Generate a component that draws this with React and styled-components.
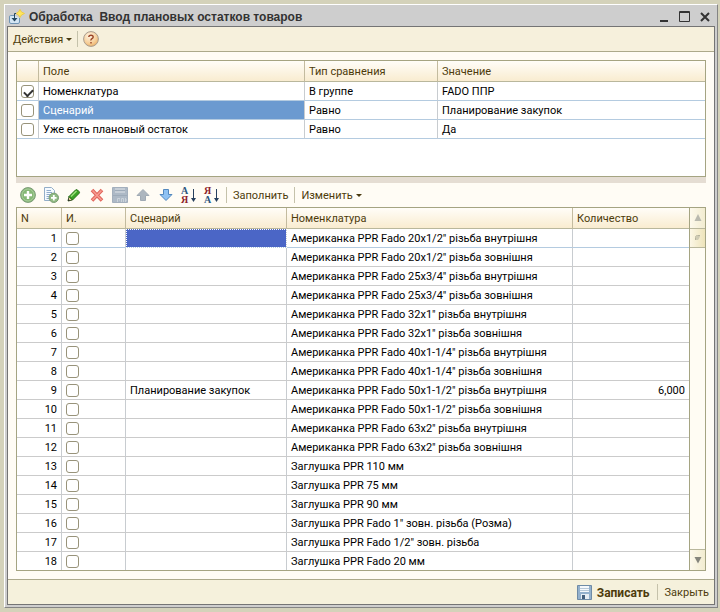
import React from "react"
import styled, { createGlobalStyle } from "styled-components"

const filters = [
  { field: "Номенклатура", compare: "В группе", value: "FADO ППР", on: true },
  {
    field: "Сценарий",
    compare: "Равно",
    value: "Планирование закупок",
    selected: true,
  },
  { field: "Уже есть плановый остаток", compare: "Равно", value: "Да" },
]

const goods = [
  { name: 'Американка PPR Fado 20x1/2" різьба внутрішня', selected: true },
  { name: 'Американка PPR Fado 20x1/2" різьба зовнішня' },
  { name: 'Американка PPR Fado 25x3/4" різьба внутрішня' },
  { name: 'Американка PPR Fado 25x3/4" різьба зовнішня' },
  { name: 'Американка PPR Fado 32x1" різьба внутрішня' },
  { name: 'Американка PPR Fado 32x1" різьба зовнішня' },
  { name: 'Американка PPR Fado 40x1-1/4" різьба внутрішня' },
  { name: 'Американка PPR Fado 40x1-1/4" різьба зовнішня' },
  {
    name: 'Американка PPR Fado 50x1-1/2" різьба внутрішня',
    scenario: "Планирование закупок",
    amount: "6,000",
  },
  { name: 'Американка PPR Fado 50x1-1/2" різьба зовнішня' },
  { name: 'Американка PPR Fado 63x2" різьба внутрішня' },
  { name: 'Американка PPR Fado 63x2" різьба зовнішня' },
  { name: "Заглушка PPR 110 мм" },
  { name: "Заглушка PPR 75 мм" },
  { name: "Заглушка PPR 90 мм" },
  { name: 'Заглушка PPR Fado 1" зовн. різьба (Розма)' },
  { name: 'Заглушка PPR Fado 1/2" зовн. різьба' },
  { name: "Заглушка PPR Fado 20 мм" },
]

const AppIcon = () => (
  <svg width="16" height="16" viewBox="0 0 16 16" fill="none">
    <path
      d="M5 6.500H1.500Q0.500 6.500 0.500 8V13Q0.500 14.500 2 14.500H9Q10.500 14.500 10.500 13V9"
      fill="#d3e5f3"
      stroke="#6f94b5"
    />
    <path d="M9 4.500H5.500V11" stroke="#24465f" />
    <path d="M2.500 9H8.500L5.500 12.500Z" fill="#24465f" />
    <path
      d="M11 0.500L12.500 3L15.500 4.500L12.500 6L11 8.500L9.500 6L7 4.500L9.500 3Z"
      fill="#ffe65c"
      stroke="#eccb4c"
    />
  </svg>
)

const HelpIcon = () => (
  <svg width="16" height="16" viewBox="0 0 16 16">
    <defs>
      <radialGradient id="help" cx="0.4" cy="0.3" r="0.8">
        <stop offset="0" stopColor="#fff3e2" />
        <stop offset="0.6" stopColor="#f6cf9a" />
        <stop offset="1" stopColor="#e9a759" />
      </radialGradient>
    </defs>
    <circle cx="8" cy="8" r="7.400" fill="url(#help)" stroke="#a89c90" />
    <path
      d="M5.800 6Q5.800 4.200 8 4.200T10.200 6Q10.200 7 9 7.700T8 9.500M8 11V12.500"
      fill="none"
      stroke="#9a4426"
      strokeWidth="1.400"
    />
  </svg>
)

const AddIcon = () => (
  <svg width="16" height="16" viewBox="0 0 16 16">
    <circle cx="8" cy="8" r="7.400" fill="#86b877" stroke="#7c9b78" />
    <circle cx="8" cy="8" r="6" fill="none" stroke="#a9cf9b" />
    <path d="M8 4V12M4 8H12" stroke="#fff" strokeWidth="2.400" />
  </svg>
)

const CopyIcon = () => (
  <svg width="16" height="16" viewBox="0 0 16 16">
    <path d="M1.500 0.500H8.500L11.500 3.500V13.500H1.500Z" fill="#f5faff" stroke="#93aec8" />
    <path d="M3.500 3.500H8M3.500 5.500H9M3.500 7.500H8M3.500 9.500H6M3.500 11.500H6" stroke="#8faccb" />
    <circle cx="10.800" cy="10.800" r="4.700" fill="#8fba82" stroke="#7a9c74" />
    <path d="M10.800 8V13.600M8 10.800H13.600" stroke="#fff" strokeWidth="1.800" />
  </svg>
)

const EditIcon = () => (
  <svg width="16" height="16" viewBox="0 0 16 16">
    <path d="M2 14L3 9.500L6.500 13Z" fill="#f3d9a4" stroke="#3b5a2a" />
    <path d="M3 9.500L9.500 3Q10.500 2 11.500 3L13.200 4.700Q14 5.500 13 6.500L6.500 13Z" fill="#3ba226" stroke="#256f17" />
    <path d="M5 9.500L10.500 4" stroke="#9be07c" strokeWidth="1.500" />
    <path d="M2 14L2.500 12L4 13.500Z" fill="#222" />
  </svg>
)

const DeleteIcon = () => (
  <svg width="16" height="16" viewBox="0 0 16 16">
    <path d="M3 3L13 13.500M13 3L3 13.500" stroke="#e0645a" strokeWidth="3.600" />
    <path d="M3.500 3.500L12.500 13M12.500 3.500L3.500 13" stroke="#f79a90" strokeWidth="1.600" />
  </svg>
)

const DisabledSaveIcon = () => (
  <svg width="16" height="16" viewBox="0 0 16 16">
    <path d="M0.500 0.500H15.500V15.500H0.500Z" fill="#adb9c6" stroke="#a3afbd" />
    <path d="M3 1H13V6H3Z" fill="#c6ced7" />
    <path d="M3 3.500H13M1 8.500H15" stroke="#9eabb9" />
    <path d="M5.500 15V11.500H8M7 13H8M9.500 15V11.500H11.500V15M13.500 11V15M13.500 13H15" fill="none" stroke="#cbd3db" />
  </svg>
)

const SaveIcon = () => (
  <svg width="16" height="16" viewBox="0 0 16 16">
    <path d="M0.500 0.500H14.500V14.500H0.500Z" fill="#93b1cd" stroke="#6e8ba6" />
    <path d="M3 1H12V7H3Z" fill="#f4f8fb" />
    <path d="M3 3.500H12M3 5.500H12" stroke="#b6c8d8" />
    <path d="M4 9H12V14H4Z" fill="#e6edf3" />
    <path d="M5 10H8V14H5Z" fill="#425e7b" />
  </svg>
)

const MoveIcon = ({ down }) => (
  <svg width="16" height="16" viewBox="0 0 16 16">
    {down ? (
      <path d="M5.500 2.500H10.500V7.500H14L8 13.500L2 7.500H5.500Z" fill="#8fc2f3" stroke="#5388be" />
    ) : (
      <path d="M8 2.500L14 8.500H10.500V13.500H5.500V8.500H2Z" fill="#adb6bf" stroke="#a0aab4" />
    )}
  </svg>
)

const Triangle = ({ up }) => (
  <svg width="8" height="8" viewBox="0 0 8 8">
    {up ? (
      <path d="M4 0L7.500 7H0.500Z" fill="#b9b9ae" />
    ) : (
      <path d="M0.500 1H7.500L4 7.500Z" fill="#85857c" />
    )}
  </svg>
)

const Grip = () => (
  <svg width="6" height="6" viewBox="0 0 6 6">
    <path d="M0.500 5V2.500Q0.500 0.500 2.500 0.500H5" fill="none" stroke="#b5b29c" />
    <path d="M1 5V1H5Q4.500 3.500 3 5Z" fill="#cfcbb4" />
  </svg>
)

const Caret = () => (
  <svg width="6" height="3" viewBox="0 0 6 3">
    <path d="M0 0H6L3 3Z" fill="#4a3a10" />
  </svg>
)

const SortIcon = ({ top, bottom, reverse }) => (
  <svg width="16" height="18" viewBox="0 0 16 18" overflow="visible">
    <SortLetter x="0" y="8" $red={reverse}>
      {top}
    </SortLetter>
    <SortLetter x="0" y="17" $red={!reverse}>
      {bottom}
    </SortLetter>
    <path d="M12.500 3V15" stroke="#27405e" />
    <path d="M10 12H15L12.500 16Z" fill="#27405e" />
  </svg>
)

const App = () => {
  return (
    <Desktop>
      <GlobalStyle />
      <Window>
        <TitleBar>
          <AppIcon />
          <Title>Обработка&nbsp; Ввод плановых остатков товаров</Title>
          <WindowButton aria-label="Свернуть">
            <svg width="12" height="12">
              <path d="M1 10H9" stroke="#333" strokeWidth="2" />
            </svg>
          </WindowButton>
          <WindowButton aria-label="Развернуть">
            <svg width="12" height="12">
              <path d="M0.500 0.500H10.500V10.500H0.500ZM0 1.500H11" fill="none" stroke="#333" />
            </svg>
          </WindowButton>
          <WindowButton aria-label="Закрыть окно">
            <svg width="12" height="12">
              <path d="M2 2L10 10M10 2L2 10" stroke="#333" strokeWidth="2" />
            </svg>
          </WindowButton>
        </TitleBar>
        <Client>
          <MenuBar>
            <TextButton>
              Действия
              <Caret />
            </TextButton>
            <Separator />
            <IconButton aria-label="Справка">
              <HelpIcon />
            </IconButton>
          </MenuBar>
          <Content>
            <FilterPanel>
              <Table>
                <colgroup>
                  <Col $width={22} />
                  <Col />
                  <Col $width={133} />
                  <Col $width={267} />
                </colgroup>
                <thead>
                  <tr>
                    <HeadCell />
                    <HeadCell>Поле</HeadCell>
                    <HeadCell>Тип сравнения</HeadCell>
                    <HeadCell>Значение</HeadCell>
                  </tr>
                </thead>
                <tbody>
                  {filters.map(row => (
                    <Row key={row.field} $blue>
                      <CheckCell>
                        <Check aria-label={row.field} defaultChecked={row.on} />
                      </CheckCell>
                      <Cell $active={row.selected}>{row.field}</Cell>
                      <Cell>{row.compare}</Cell>
                      <Cell>{row.value}</Cell>
                    </Row>
                  ))}
                </tbody>
              </Table>
            </FilterPanel>
            <Splitter />
            <Toolbar>
              <Icons>
                <IconButton aria-label="Добавить">
                  <AddIcon />
                </IconButton>
                <IconButton aria-label="Скопировать">
                  <CopyIcon />
                </IconButton>
                <IconButton aria-label="Изменить строку">
                  <EditIcon />
                </IconButton>
                <IconButton aria-label="Удалить">
                  <DeleteIcon />
                </IconButton>
                <IconButton aria-label="Сохранить строку" disabled>
                  <DisabledSaveIcon />
                </IconButton>
                <IconButton aria-label="Вверх" disabled>
                  <MoveIcon />
                </IconButton>
                <IconButton aria-label="Вниз">
                  <MoveIcon down />
                </IconButton>
                <IconButton aria-label="По возрастанию">
                  <SortIcon top="А" bottom="Я" />
                </IconButton>
                <IconButton aria-label="По убыванию">
                  <SortIcon top="Я" bottom="А" reverse />
                </IconButton>
              </Icons>
              <Separator />
              <TextButton>Заполнить</TextButton>
              <Separator />
              <TextButton>
                Изменить
                <Caret />
              </TextButton>
            </Toolbar>
            <GoodsPanel>
              <Table>
                <colgroup>
                  <Col $width={45} />
                  <Col $width={64} />
                  <Col $width={161} />
                  <Col />
                  <Col $width={116} />
                </colgroup>
                <thead>
                  <tr>
                    <HeadCell>N</HeadCell>
                    <HeadCell>И.</HeadCell>
                    <HeadCell>Сценарий</HeadCell>
                    <HeadCell>Номенклатура</HeadCell>
                    <HeadCell>Количество</HeadCell>
                  </tr>
                </thead>
                <tbody>
                  {goods.map((row, i) => (
                    <Row key={row.name} $blue={row.selected}>
                      <Cell $right>{i + 1}</Cell>
                      <CheckCell>
                        <Check aria-label={"И. " + (i + 1)} />
                      </CheckCell>
                      <Cell $focused={row.selected}>{row.scenario}</Cell>
                      <Cell>{row.name}</Cell>
                      <Cell $right>{row.amount}</Cell>
                    </Row>
                  ))}
                </tbody>
              </Table>
              <Scrollbar>
                <ScrollButton aria-label="Прокрутить вверх">
                  <Triangle up />
                </ScrollButton>
                <Thumb>
                  <Grip />
                </Thumb>
                <Track />
                <ScrollButton aria-label="Прокрутить вниз" $bottom>
                  <Triangle />
                </ScrollButton>
              </Scrollbar>
            </GoodsPanel>
          </Content>
          <Footer>
            <TextButton $bold>
              <SaveIcon />
              Записать
            </TextButton>
            <Separator />
            <TextButton>Закрыть</TextButton>
          </Footer>
        </Client>
      </Window>
    </Desktop>
  )
}

const GlobalStyle = createGlobalStyle`
  * {
    box-sizing: border-box;
  }
  body {
    margin: 0;
    background: #d4d2ba;
    color: #000;
    font: 11px/16px Roboto, "Liberation Sans", sans-serif;
  }
  button {
    margin: 0;
    padding: 0;
    border: 0;
    background: none;
    color: inherit;
    font: inherit;
  }
  svg {
    display: block;
    flex: none;
  }
`

const Desktop = styled.div`
  display: flex;
  min-height: 100vh;
  padding: 4px 2px 4px 4px;
`

const Window = styled.main`
  display: flex;
  flex: 1;
  flex-direction: column;
  min-width: 0;
  padding: 0 2px 2px;
  background: #cecece;
  border: 1px solid #fff;
  border-right-color: #848484;
  border-bottom-color: #848484;
`

const TitleBar = styled.header`
  display: flex;
  align-items: center;
  gap: 8px;
  height: 21px;
  padding: 2px 4px 0 2px;
  color: #333;
`

const Title = styled.h1`
  flex: 1;
  margin: 0 0 0 -4px;
  font: bold 12px/16px "Liberation Sans", sans-serif;
`

const WindowButton = styled.button`
  width: 12px;
  height: 12px;
`

const Client = styled.div`
  display: flex;
  flex: 1;
  flex-direction: column;
  background: #fffcf5;
  border: 1px solid #747474;
`

const MenuBar = styled.div`
  display: flex;
  align-items: center;
  gap: 5px;
  height: 25px;
  padding: 0 5px;
  background: #f6f0dc;
  border-bottom: 1px solid #aca98b;
`

const TextButton = styled.button`
  display: flex;
  align-items: center;
  gap: 3px;
  padding-top: 1px;
  color: #4d3b0b;
  ${props => props.$bold && "gap: 4px; font-weight: bold; font-size: 12px;"}
`

const IconButton = styled.button`
  display: flex;
  align-items: center;
  width: 16px;
  height: 16px;
`

const Separator = styled.span`
  width: 1px;
  height: 16px;
  background: #c5c2ab;
`

const Content = styled.div`
  flex: 1;
  padding: 8px;
`

const FilterPanel = styled.section`
  height: 117px;
  overflow: hidden;
  background: #fff;
  border: 1px solid #a5a482;
`

const Splitter = styled.div`
  height: 6px;
  background: #e5ddd3;
`

const Toolbar = styled.div`
  display: flex;
  align-items: center;
  gap: 6px;
  height: 24px;
  padding: 0 4px;
`

const Icons = styled.div`
  display: flex;
  gap: 7px;
`

const SortLetter = styled.text`
  font: bold 10px "Liberation Serif", serif;
  fill: ${props => (props.$red ? "#8e1f2b" : "#2b567f")};
`

const GoodsPanel = styled.section`
  display: flex;
  background: #fff;
  border: 1px solid #a5a482;
`

const Table = styled.table`
  flex: 1;
  width: 100%;
  min-width: 0;
  table-layout: fixed;
  border-spacing: 0;
  white-space: nowrap;
`

const Col = styled.col`
  width: ${props => (props.$width ? props.$width + "px" : "auto")};
`

const HeadCell = styled.th`
  height: 21px;
  padding: 2px 4px 0;
  background: linear-gradient(#fffdf8, #f9ecd0);
  border-right: 1px solid #c3bb9f;
  border-bottom: 1px solid #b9b79c;
  color: #4d3b0b;
  font-weight: normal;
  text-align: left;
  &:last-child {
    border-right: 0;
  }
`

const Cell = styled.td`
  height: 19px;
  padding: 2px 4px 0;
  overflow: hidden;
  border-right: 1px solid #c8ccd0;
  border-bottom: 1px solid #cbcbcb;
  text-align: ${props => (props.$right ? "right" : "left")};
  ${props => props.$active && "background: #6b9ad0; color: #fff;"}
  ${props =>
    props.$focused &&
    "background: #4b66c6; outline: 1px dotted #fff; outline-offset: -1px;"}
  &:last-child {
    border-right: 0;
  }
`

const CheckCell = styled(Cell)`
  padding-top: 0;
  line-height: 0;
`

const Row = styled.tr`
  td {
    ${props => props.$blue && "border-bottom-color: #b4cbe0;"}
  }
  &:last-child td {
    ${props => !props.$blue && "height: 18px; border-bottom: 0;"}
  }
`

const Check = styled.input.attrs({ type: "checkbox" })`
  width: 13px;
  height: 13px;
  margin: 0;
  appearance: none;
  background: #fff;
  border: 1px solid #98937a;
  border-radius: 3px;
  vertical-align: middle;
  &:checked::before {
    content: "";
    display: block;
    width: 7px;
    height: 4px;
    margin: 3px 2px;
    border: solid #333;
    border-width: 0 0 2px 2px;
    transform: rotate(-45deg);
  }
`

const Scrollbar = styled.div`
  display: flex;
  flex-direction: column;
  width: 16px;
  border-left: 1px solid #a5a482;
  background: #fffcf3;
`

const ScrollButton = styled.button`
  display: grid;
  place-items: center;
  height: 21px;
  background: linear-gradient(90deg, #fdf9ec, #f2ecd0);
  border: solid #b9b79c;
  border-width: ${props => (props.$bottom ? "1px 0 0" : "0 0 1px")};
`

const Thumb = styled.div`
  display: grid;
  place-items: center;
  height: 19px;
  background: linear-gradient(90deg, #fcf7e6, #eee4ba);
  border-bottom: 1px solid #b9b79c;
`

const Track = styled.div`
  flex: 1;
`

const Footer = styled.footer`
  display: flex;
  align-items: center;
  justify-content: flex-end;
  gap: 7px;
  height: 25px;
  padding: 0 5px;
  background: #f5f1dc;
  border-top: 1px solid #aca98b;
`

export default App
